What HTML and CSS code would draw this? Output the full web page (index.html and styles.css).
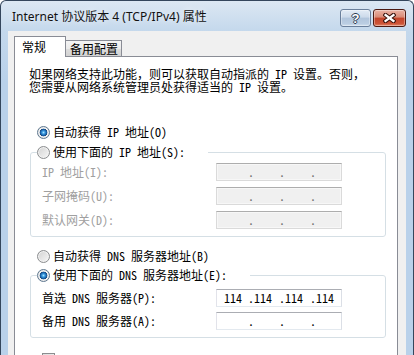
FILE: index.html
```html
<!DOCTYPE html>
<html lang="zh-CN">
<head>
    <meta charset="UTF-8">
    <meta name="viewport" content="width=device-width, initial-scale=1.0">
    <title>Internet 协议版本 4 (TCP/IPv4) 属性</title>
    <link rel="stylesheet" href="styles.css">
</head>
<body>

    <div class="window">
        <!-- Title bar -->
        <div class="titlebar">
            <div class="title">Internet 协议版本 4 (TCP/IPv4) 属性</div>
            <div class="caption-btn help"><span>?</span></div>
            <div class="caption-btn close">
                <svg width="13" height="10" viewBox="0 0 13 10">
                    <path d="M2.5 2 L10.5 8 M10.5 2 L2.5 8" stroke="#3a140e" stroke-width="4.4" stroke-linecap="square" fill="none"/>
                    <path d="M2.5 2 L10.5 8 M10.5 2 L2.5 8" stroke="#ffffff" stroke-width="2.2" stroke-linecap="square" fill="none"/>
                </svg>
            </div>
        </div>

        <div class="client">
            <div class="tabs">
                <div class="tab active">常规</div>
                <div class="tab">备用配置</div>
            </div>

            <div class="panel">
                <p class="intro">如果网络支持此功能，则可以获取自动指派的 IP 设置。否则，<br>您需要从网络系统管理员处获得适当的 IP 设置。</p>

                <div class="option ip-auto"><span class="radio on"></span>自动获得 IP 地址(O)</div>

                <fieldset class="group ip-group">
                    <legend><span class="radio"></span>使用下面的 IP 地址(S):</legend>
                    <div class="field off">
                        <span class="label">IP 地址(I):</span>
                        <div class="ip"><span></span><span>.</span><span></span><span>.</span><span></span><span>.</span><span></span></div>
                    </div>
                    <div class="field off">
                        <span class="label">子网掩码(U):</span>
                        <div class="ip"><span></span><span>.</span><span></span><span>.</span><span></span><span>.</span><span></span></div>
                    </div>
                    <div class="field off">
                        <span class="label">默认网关(D):</span>
                        <div class="ip"><span></span><span>.</span><span></span><span>.</span><span></span><span>.</span><span></span></div>
                    </div>
                </fieldset>

                <div class="option dns-auto"><span class="radio"></span>自动获得 DNS 服务器地址(B)</div>

                <fieldset class="group dns-group">
                    <legend><span class="radio on"></span>使用下面的 DNS 服务器地址(E):</legend>
                    <div class="field">
                        <span class="label">首选 DNS 服务器(P):</span>
                        <div class="ip"><span>114</span><span>.</span><span>114</span><span>.</span><span>114</span><span>.</span><span>114</span></div>
                    </div>
                    <div class="field">
                        <span class="label">备用 DNS 服务器(A):</span>
                        <div class="ip"><span></span><span>.</span><span></span><span>.</span><span></span><span>.</span><span></span></div>
                    </div>
                </fieldset>

                <div class="check-row"><span class="checkbox"></span></div>
            </div>
        </div>
    </div>

</body>
</html>
```

FILE: styles.css
```css
* {
    box-sizing: border-box;
}
body {
    margin: 0;
    background: #ffffff;
    overflow: hidden;
}
.window {
    width: 414px;
    height: 355px;
    overflow: hidden;
    border: 1px solid #34465c;
    border-bottom: none;
    border-radius: 6px 6px 0 0;
    padding: 0 7px;
    background: linear-gradient(#dce7f3, #c4d8ec 30px, #b9d1ea 80px);
    display: flex;
    flex-direction: column;
}

/* title bar */
.titlebar {
    height: 30px;
    flex: none;
    display: flex;
    align-items: flex-start;
    padding-top: 8px;
}
.title {
    flex: 1;
    padding-left: 4px;
    font: 12px/16px "Noto Sans", "Noto Sans CJK SC", sans-serif;
    color: #111;
    text-shadow: 0 0 6px rgba(255, 255, 255, 0.8);
}
.caption-btn {
    height: 18px;
    border-radius: 3px;
    display: flex;
    align-items: center;
    justify-content: center;
    box-shadow: inset 0 0 0 1px rgba(255, 255, 255, 0.35);
}
.help {
    width: 31px;
    margin-right: 2px;
    border: 1px solid #6a7f9b;
    background: linear-gradient(#e3ecf6, #ccdaea 45%, #b1c5dc 50%, #bacde2 85%, #d2e0ef);
}
.help span {
    font: bold 13px/1 "Liberation Sans", sans-serif;
    color: #fff;
    text-shadow: 1px 0 #2d3d52, -1px 0 #2d3d52, 0 1px #2d3d52, 0 -1px #2d3d52;
}
.close {
    width: 33px;
    border: 1px solid #4c1a12;
    background: linear-gradient(#eab3a5, #d98a76 45%, #c2442a 50%, #cd5538 85%, #e18a6d);
}

/* client area */
.client {
    flex: 1;
    background: #f0f0f0;
    padding: 5px 8px 0 6px;
}
.tabs {
    display: flex;
    align-items: flex-end;
    font: 12px "Noto Sans CJK SC", sans-serif;
    color: #000;
}
.tab {
    width: 57px;
    height: 16px;
    line-height: 15px;
    padding: 0 3px 0 4px;
    margin-left: -1px;
    border: 1px solid #898c95;
    border-bottom: none;
    background: linear-gradient(#f4f4f4, #ebebeb 50%, #dedede 50%, #d2d2d2);
}
.tab.active {
    width: 52px;
    height: 21px;
    line-height: 16px;
    padding: 2px 0 0 7px;
    margin: 0 0 -1px 0;
    background: #fff;
    position: relative;
    z-index: 1;
}
.panel {
    background: #fff;
    border: 1px solid #898c95;
    padding: 10px 11px 20px 14px;
    font: 12px/16px "Noto Sans Mono CJK SC", "Noto Sans CJK SC", monospace;
    color: #000;
}
.intro {
    margin: 0;
    line-height: 13px;
}

/* radios and group boxes */
.option {
    display: flex;
    align-items: center;
    height: 16px;
    padding-left: 8px;
}
.ip-auto { margin-top: 31px; }
.dns-auto { margin-top: 11px; }
.radio {
    flex: none;
    width: 13px;
    height: 13px;
    margin-right: 3px;
    border: 1px solid #8b8d8f;
    border-radius: 50%;
    background: linear-gradient(135deg, #d2d2d2, #f7f7f7);
    box-shadow: inset 0 0 0 1px #f2f2f2;
}
.radio.on {
    border-color: #5f7890;
    background: radial-gradient(circle, #a8e2ff 0, #3c9be0 1.5px, #165fa7 3px, #1d4c80 3.6px, #f7f7f7 4.2px, #e4e4e4 5.5px);
    box-shadow: none;
}
.group {
    margin: 4px 0 0 1px;
    border: 1px solid #d5dfe5;
    border-radius: 3px;
    padding: 3px 0 7px 6px;
    min-width: 0;
}
.dns-group {
    margin-top: 3px;
    padding-top: 6px;
}
.group legend {
    display: flex;
    align-items: center;
    height: 16px;
    padding: 0 23px 0 0;
}
.field {
    display: flex;
    align-items: center;
    height: 18px;
    padding-left: 5px;
}
.field + .field { margin-top: 6px; }
.dns-group .field + .field { margin-top: 5px; }
.label {
    width: 174px;
}
.field.off .label {
    color: #a0a0a0;
}

/* ip address boxes */
.ip {
    display: grid;
    grid-template-columns: 24px 6px 25px 6px 25px 6px 25px;
    width: 126px;
    height: 18px;
    padding-left: 7px;
    line-height: 16px;
    border: 1px solid #e3e9ef;
    border-top-color: #abadb3;
    border-left-color: #e2e3ea;
    border-right-color: #dbdfe6;
    background: #fff;
}
.field.off .ip {
    background: #f0f0f0;
    border-color: #dadada;
    border-top-color: #adadad;
    color: #6d6d6d;
    box-shadow: inset 0 0 0 1px #f7f7f7;
}

.check-row {
    display: flex;
    align-items: center;
    margin-top: 15px;
    padding-left: 13px;
    height: 13px;
}
.checkbox {
    flex: none;
    width: 13px;
    height: 13px;
    border: 1px solid #8b8d8f;
    background: linear-gradient(135deg, #dcdcdc, #f8f8f8);
}
```
